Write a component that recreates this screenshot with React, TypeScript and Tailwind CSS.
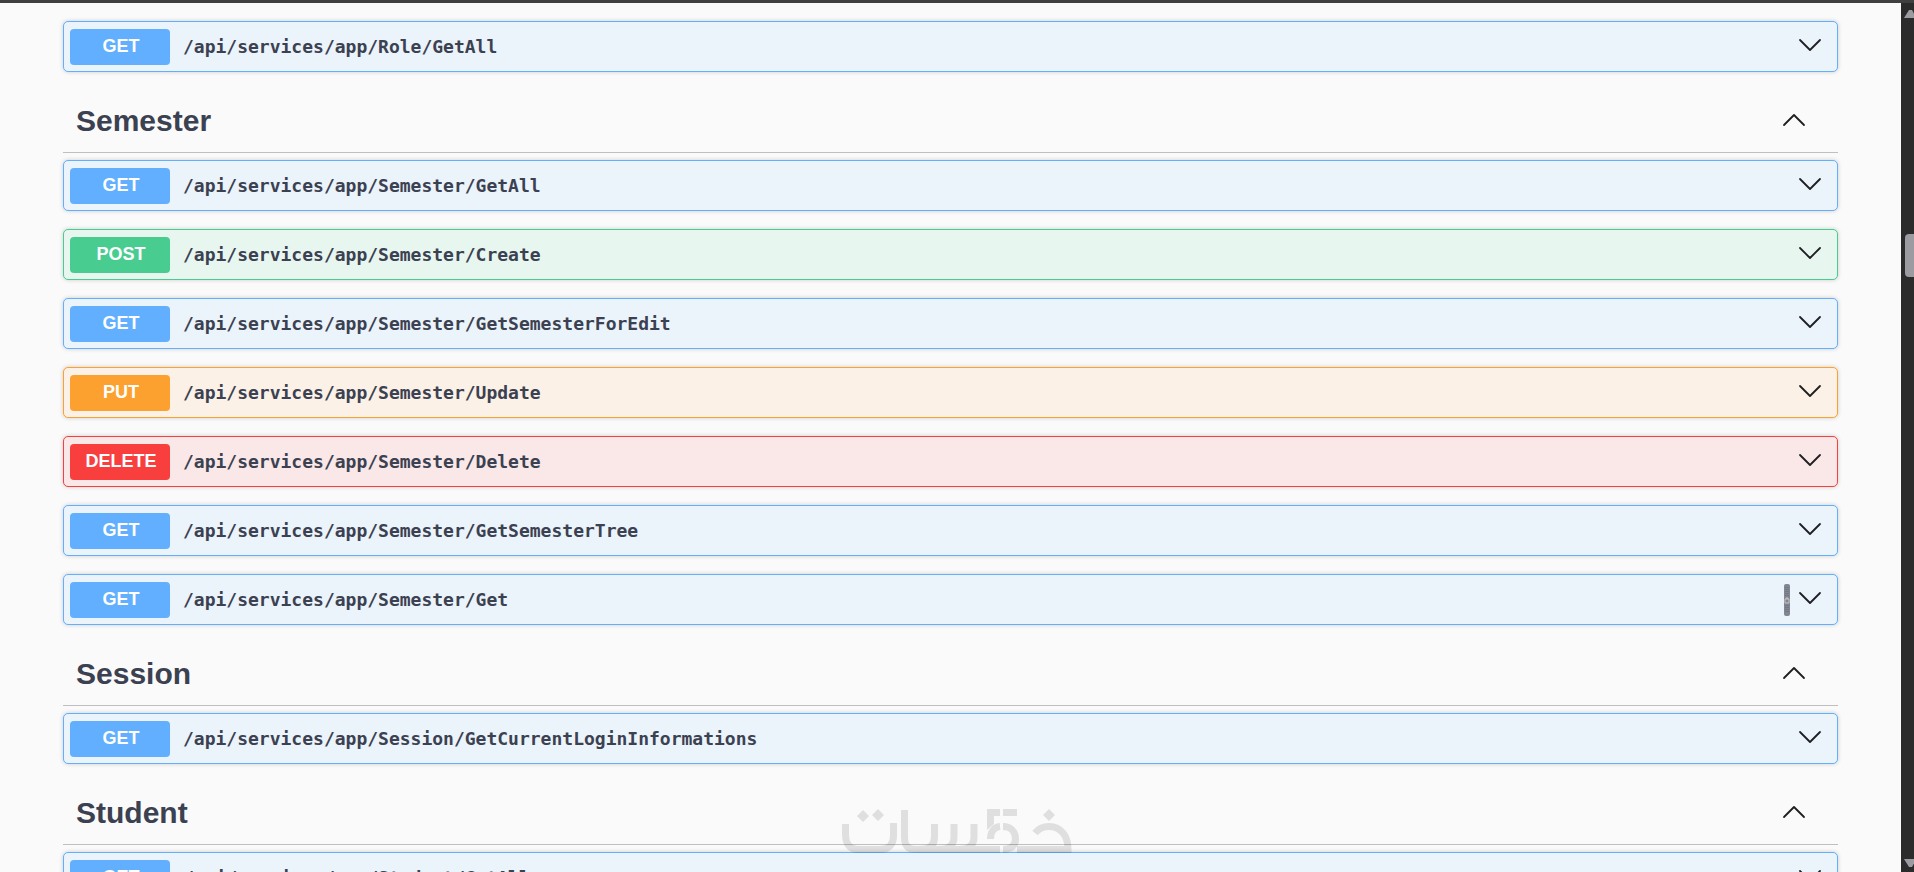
type Method = "GET" | "POST" | "PUT" | "DELETE";

interface Operation {
  method: Method;
  path: string;
  grip?: boolean;
}

interface Section {
  name?: string;
  operations: Operation[];
}

const base = "/api/services/app";

const sections: Section[] = [
  { operations: [{ method: "GET", path: `${base}/Role/GetAll` }] },
  {
    name: "Semester",
    operations: [
      { method: "GET", path: `${base}/Semester/GetAll` },
      { method: "POST", path: `${base}/Semester/Create` },
      { method: "GET", path: `${base}/Semester/GetSemesterForEdit` },
      { method: "PUT", path: `${base}/Semester/Update` },
      { method: "DELETE", path: `${base}/Semester/Delete` },
      { method: "GET", path: `${base}/Semester/GetSemesterTree` },
      { method: "GET", path: `${base}/Semester/Get`, grip: true },
    ],
  },
  {
    name: "Session",
    operations: [{ method: "GET", path: `${base}/Session/GetCurrentLoginInformations` }],
  },
  {
    name: "Student",
    operations: [{ method: "GET", path: `${base}/Student/GetAll` }],
  },
];

const rowStyles: Record<Method, string> = {
  GET: "border-[#61affe] bg-[#ebf3fb]",
  POST: "border-[#49cc90] bg-[#e8f6f0]",
  PUT: "border-[#fca130] bg-[#fbf1e6]",
  DELETE: "border-[#f93e3e] bg-[#fae7e7]",
};

const badgeStyles: Record<Method, string> = {
  GET: "bg-[#61affe]",
  POST: "bg-[#49cc90]",
  PUT: "bg-[#fca130]",
  DELETE: "bg-[#f93e3e]",
};

function Chevron({ up = false }: { up?: boolean }) {
  return (
    <svg
      className="size-6 shrink-0"
      viewBox="0 0 24 24"
      fill="none"
      stroke="#1f2023"
      strokeWidth="1.8"
      strokeLinecap="round"
      strokeLinejoin="round"
      aria-hidden="true"
    >
      <path d={up ? "M2 17 12 7 22 17" : "M2 7 12 17 22 7"} />
    </svg>
  );
}

function Grip() {
  return (
    <svg className="h-8 w-1.5 shrink-0" viewBox="0 0 6 32" aria-hidden="true">
      <rect width="6" height="32" rx="2" fill="#84868d" />
      <path d="M2 3v9M4 3v9M2 21v8M4 21v8" stroke="#5d6895" strokeWidth="1" strokeDasharray="1 1" />
      <path d="M1 15h4v4H1zM2 15v-1h2v1" fill="none" stroke="#c3c5c9" />
    </svg>
  );
}

function OperationRow({ method, path, grip }: Operation) {
  return (
    <button
      type="button"
      className={`flex h-[51px] w-full items-center rounded-[5px] border pl-1.5 pr-[15px] text-left shadow-[0_0_4px_rgba(0,0,0,0.19)] ${rowStyles[method]}`}
    >
      <span
        className={`flex h-9 w-[100px] shrink-0 items-center justify-center rounded-[4px] pb-0.5 pl-0.5 text-lg font-bold text-white ${badgeStyles[method]}`}
      >
        {method}
      </span>
      <span className="ml-[13px] grow font-['DejaVu_Sans_Mono',monospace] text-lg font-bold text-[#3b4151]">
        {path}
      </span>
      <span className="flex items-center gap-2">
        {grip && <Grip />}
        <span className="pb-1">
          <Chevron />
        </span>
      </span>
    </button>
  );
}

function SectionHeading({ name }: { name: string }) {
  return (
    <h3 className="mb-[7px] border-b border-[#bfbfc1] pt-4">
      <button type="button" className="flex h-16 w-full items-center justify-between pl-[13px] pr-8 text-left">
        <span className="pt-0.5 text-3xl font-bold text-[#3b4151]">{name}</span>
        <Chevron up />
      </button>
    </h3>
  );
}

function Watermark() {
  return (
    <svg
      className="pointer-events-none absolute bottom-4 left-[44%] h-12 w-60"
      viewBox="0 0 240 48"
      fill="none"
      aria-hidden="true"
    >
      <g opacity="0.1" stroke="#000" strokeWidth="7">
        <path d="M9.5 16V26C9.5 36 14 41.5 22 41.5H44C53 41.5 57.5 36 57.5 28V15" />
        <path d="M68.5 2V30C68.5 37 72 41.5 79 41.5H84C94 41.5 98.5 37 98.5 29V16" />
        <path d="M84 41.5H103C113 41.5 118 37 118 29V16" />
        <path d="M103 41.5H123C133 41.5 138 37 138 29V16" />
        <path d="M123 41.5H164M167 41.5C175 41.5 179.5 38 179.5 31C179.5 23 174 18.5 167 18.5M164 18.5C158 19 154.5 24 154.5 31" />
        <path d="M167 4.5H181" />
        <path d="M199 25C203 20 208 18.5 213 18.5C225 18.5 232 28 232 41.5H181" />
        <g fill="#000" stroke="none">
          <path d="M151 1H164V8H158V16L151 22Z" />
          <path d="M27 2 33 8 27 14 21 8ZM42 1 48 7 42 13 36 7Z" />
          <path d="M213 1 219 7 213 13 207 7Z" />
        </g>
      </g>
    </svg>
  );
}

function ScrollRail() {
  return (
    <div className="relative w-[13px] shrink-0 overflow-hidden bg-[#2b2b2b]">
      <svg className="absolute left-[3px] top-1.5 h-2.5 w-3" viewBox="0 0 12 10" aria-hidden="true">
        <path d="M0 9 5 1h3l4 7v1z" fill="#9b9ba1" />
      </svg>
      <div className="absolute left-1 top-[231px] h-[43px] w-3 rounded-[4px] bg-[#9b9ba1]" />
      <svg className="absolute bottom-1 left-[3px] h-2.5 w-3" viewBox="0 0 12 10" aria-hidden="true">
        <path d="M0 1h12v1L8 9H5z" fill="#9b9ba1" />
      </svg>
    </div>
  );
}

export default function App() {
  return (
    <div className="flex h-screen flex-col overflow-hidden border-t-[3px] border-[#404040] bg-[#fafafa] font-['Liberation_Sans',Arial,sans-serif]">
      <div className="flex min-h-0 grow">
        <main className="relative grow overflow-hidden px-[63px] pt-[18px]">
          {sections.map(({ name, operations }) => (
            <section key={name ?? "Role"}>
              {name && <SectionHeading name={name} />}
              <div className="flex flex-col gap-[18px]">
                {operations.map((operation) => (
                  <OperationRow key={operation.method + operation.path} {...operation} />
                ))}
              </div>
            </section>
          ))}
          <Watermark />
        </main>
        <ScrollRail />
      </div>
    </div>
  );
}
